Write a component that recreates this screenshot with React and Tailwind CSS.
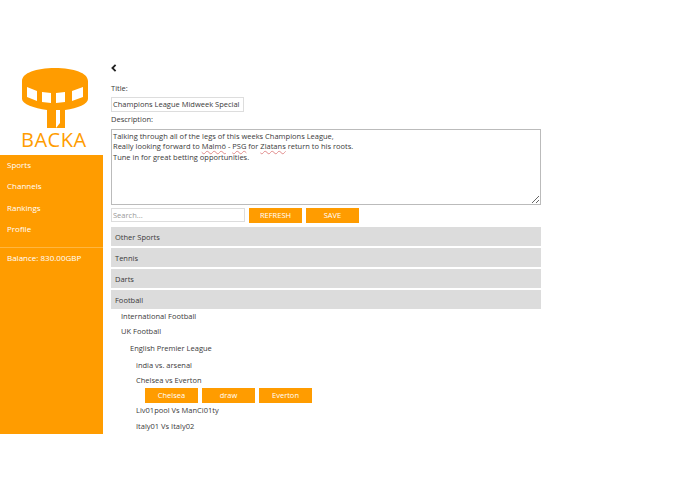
import React from 'react';

const menu = ['Sports', 'Channels', 'Rankings', 'Profile'];
const sports = ['Other Sports', 'Tennis', 'Darts', 'Football'];

const Logo = () => (
  <svg viewBox="0 0 66 60" className="w-[66px] h-[60px] block">
    <path fillRule="evenodd" fill="#ff9c00" d="M0 13C0 5 14 0 33 0s33 5 33 13v18c0 5-10 9-23 11v18H25V42C12 40 0 36 0 31ZM5 19l10 4v10l-10-4ZM20 24l9 1v10l-9-1ZM34 25l9-1v10l-9 1ZM50 23l11-4v10l-11 4Z" />
    <path fill="#fff" d="M34 42h4v13l-4 5Z" />
  </svg>
);

const Sidebar = () => (
  <aside className="w-[103px] shrink-0 flex flex-col">
    <div className="h-[155px] pt-[68px] pl-[22px]">
      <Logo />
      <div className="text-[#ff9c00] text-[20px] font-medium leading-[20px] tracking-[0.5px] mt-[2px] ml-[-1px]">BACKA</div>
    </div>
    <nav className="h-[279px] bg-[#ff9c00] text-white text-[8px]">
      <ul className="mt-[-1px]">
        {menu.map((item) => (
          <li key={item} className="h-[21.3px] pl-[7px] leading-[21.3px]">{item}</li>
        ))}
      </ul>
      <div className="mt-[8px] border-t border-[#ffb640] pl-[7px] leading-[20px]">Balance: 830.00GBP</div>
    </nav>
  </aside>
);

const OrangeButton = ({ children, upper }) => (
  <button className={`w-[53px] h-[15px] bg-[#ff9c00] text-white text-[7.5px] leading-[15px] text-center ${upper ? 'uppercase' : ''}`}>
    {children}
  </button>
);

const Squiggle = ({ children }) => (
  <span className="underline decoration-wavy decoration-[#e08a8a] decoration-[0.5px]">{children}</span>
);

export default function App() {
  return (
    <div className="flex h-[494px] w-[695px] bg-white overflow-hidden text-[#3a3a3a] text-[7.5px] font-['Open_Sans',sans-serif]">
      <Sidebar />
      <main className="w-[430px] ml-[8px] pt-[62px]">
        {/* back arrow */}
        <svg viewBox="0 0 6 8" className="w-[6px] h-[8px] mt-[2px] block">
          <path d="M4.6 0.8 1.4 4l3.2 3.2" fill="none" stroke="#222" strokeWidth="1.8" />
        </svg>

        <label className="block mt-[9px] h-[15px] leading-[15px]">Title:</label>
        <div className="mt-[1px] w-[133px] h-[15px] border border-[#ddd] px-[1px] leading-[13px] whitespace-nowrap">
          Champions League Midweek Special
        </div>
        <label className="block h-[17px] leading-[15px]">Description:</label>
        <div className="w-[430px] h-[76px] border border-[#bbb] resize overflow-auto px-[1px] py-[1px] leading-[10.4px]">
          Talking through all of the legs of this weeks Champions League,<br />
          Really looking forward to <Squiggle>Malmö</Squiggle> - <Squiggle>PSG</Squiggle> for <Squiggle>Zlatans</Squiggle> return to his roots.<br />
          Tune in for great betting opportunities.
        </div>

        <div className="mt-[3px] flex">
          <input
            placeholder="Search..."
            className="w-[134px] h-[14px] border border-[#ddd] px-[1px] text-[7.5px] placeholder:text-[#999] outline-none"
          />
          <div className="ml-[4px] flex gap-[4px]">
            <OrangeButton upper>Refresh</OrangeButton>
            <OrangeButton upper>Save</OrangeButton>
          </div>
        </div>

        <div className="mt-[4px] flex flex-col gap-[2px]">
          {sports.map((s) => (
            <div key={s} className="h-[19px] bg-[#dcdcdc] pl-[4px] leading-[20px]">{s}</div>
          ))}
        </div>

        <ul>
          <li className="h-[15px] pl-[10px] leading-[15px]">International Football</li>
          <li className="h-[15px] pl-[10px] leading-[15px]">UK Football</li>
          <li className="h-[17px] mt-[1px] pl-[19px] leading-[17px]">English Premier League</li>
          <li className="h-[16px] pl-[25px] leading-[16px]">india vs. arsenal</li>
          <li className="h-[15px] pl-[25px] leading-[15px]">Chelsea vs Everton</li>
          <li className="pl-[34px] flex gap-[4px] h-[15px]">
            <OrangeButton>Chelsea</OrangeButton>
            <OrangeButton>draw</OrangeButton>
            <OrangeButton>Everton</OrangeButton>
          </li>
          <li className="h-[15px] pl-[25px] leading-[15px]">Liv01pool Vs ManCi01ty</li>
          <li className="h-[16px] pl-[25px] leading-[16px]">Italy01 Vs Italy02</li>
        </ul>
      </main>
    </div>
  );
}
